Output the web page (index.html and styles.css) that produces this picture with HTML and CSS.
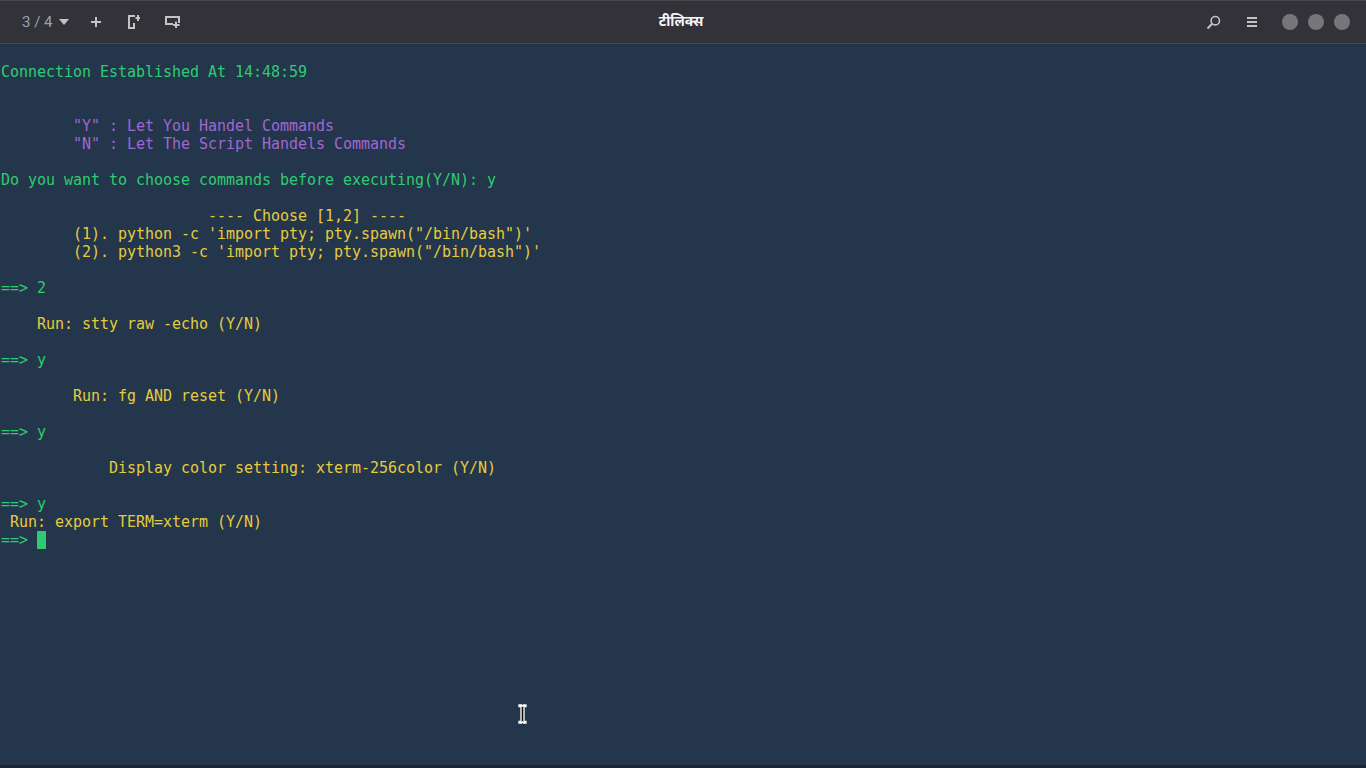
FILE: index.html
```html
<!DOCTYPE html>
<html lang="en">
<head>
    <meta charset="UTF-8">
    <title>टीलिक्स</title>
    <link rel="stylesheet" href="styles.css">
</head>
<body>
    <header class="toolbar">
        <div class="toolbar-left">
            <span class="tab-count">3 / 4</span>
            <svg class="icon caret" width="10" height="6" viewBox="0 0 10 6"><path d="M0 0h10L5 6z"/></svg>
            <svg class="icon add" width="12" height="12" viewBox="0 0 12 12"><path d="M5 1h2v4h4v2H7v4H5V7H1V5h4z"/></svg>
            <svg class="icon split-v" width="12" height="14" viewBox="0 0 12 14"><path d="M0 0h7v2H2v10h3V8h2v6H0z"/><path d="M9 0h2v2h1v2h-1v2H9V4H7.500V2H9z"/></svg>
            <svg class="icon split-h" width="15" height="12" viewBox="0 0 15 12"><path d="M0 0h15v7h-2V2H2v5h6v2H0z"/><path d="M10 5.500h2V8h2.500v2H12v2h-2v-2H8V8h2z"/></svg>
        </div>
        <div class="title">टीलिक्स</div>
        <div class="toolbar-right">
            <svg class="icon search" width="15" height="15" viewBox="0 0 15 15"><circle cx="9.300" cy="5.700" r="4.200" fill="none" stroke="#c4c4c6" stroke-width="1.600"/><path d="M6.200 8.800L1.500 13.500" fill="none" stroke="#c4c4c6" stroke-width="2"/></svg>
            <svg class="icon menu" width="10" height="10" viewBox="0 0 10 10"><path d="M0 0h10v2H0zM0 4h10v2H0zM0 8h10v2H0z"/></svg>
            <div class="window-buttons">
                <span class="window-button"></span>
                <span class="window-button"></span>
                <span class="window-button"></span>
            </div>
        </div>
    </header>

    <main class="terminal">
<pre class="output">

<span class="green">Connection Established At 14:48:59</span>


<span class="purple">        "Y" : Let You Handel Commands</span>
<span class="purple">        "N" : Let The Script Handels Commands</span>

<span class="green">Do you want to choose commands before executing(Y/N): y</span>

<span class="yellow">                       ---- Choose [1,2] ----</span>
<span class="yellow">        (1). python -c 'import pty; pty.spawn("/bin/bash")'</span>
<span class="yellow">        (2). python3 -c 'import pty; pty.spawn("/bin/bash")'</span>

<span class="green">==&gt; 2</span>

<span class="yellow">    Run: stty raw -echo (Y/N)</span>

<span class="green">==&gt; y</span>

<span class="yellow">        Run: fg AND reset (Y/N)</span>

<span class="green">==&gt; y</span>

<span class="yellow">            Display color setting: xterm-256color (Y/N)</span>

<span class="green">==&gt; y</span>
<span class="yellow"> Run: export TERM=xterm (Y/N)</span>
<span class="green">==&gt; </span><span class="cursor"> </span></pre>
        <svg class="mouse-cursor" width="9" height="20" viewBox="0 0 9 20"><path d="M1 1h2.500l1 1 1-1H8v1.500H6v15H8V19H5.500l-1-1-1 1H1v-1.500h2v-15H1z" fill="#111" stroke="#fff" stroke-width="1.300"/></svg>
    </main>

    <div class="bottom-strip"></div>
</body>
</html>
```

FILE: styles.css
```css
html, body {
    height: 100%;
}

body {
    margin: 0;
    display: flex;
    flex-direction: column;
    overflow: hidden;
    background-color: #24364b;
    font-family: "Noto Sans", "Open Sans", sans-serif;
}

.toolbar {
    flex: none;
    height: 42px;
    display: grid;
    grid-template-columns: 1fr auto 1fr;
    align-items: center;
    padding: 0 16px 0 22px;
    background-color: #323238;
    border-top: 1px solid #47474d;
    border-bottom: 1px solid #47484e;
}

.toolbar-left {
    display: flex;
    align-items: center;
}

.toolbar-right {
    display: flex;
    align-items: center;
    justify-content: flex-end;
}

.icon {
    display: block;
    fill: #c4c4c6;
}

.tab-count {
    width: 37px;
    color: #98a3b5;
    font-size: 15px;
    font-family: Roboto, sans-serif;
    white-space: nowrap;
}

.add {
    margin-left: 21px;
}

.split-v {
    margin-left: 26px;
}

.split-h {
    margin-left: 25px;
}

.title {
    margin: 0 10px 3px 0;
    color: #f4f4f6;
    font-size: 14px;
    font-weight: 700;
}

.menu {
    margin-left: 26px;
}

.window-buttons {
    display: flex;
    gap: 10px;
    margin-left: 25px;
}

.window-button {
    width: 16px;
    height: 16px;
    border-radius: 50%;
    background-color: #77767b;
}

.terminal {
    flex: 1;
    position: relative;
    min-height: 0;
}

.output {
    margin: 0;
    padding: 1px 0 0 1px;
    font-family: "DejaVu Sans Mono", monospace;
    font-size: 15px;
    line-height: 18px;
    letter-spacing: -0.03px;
}

.green {
    color: #2ecc71;
}

.purple {
    color: #a066d3;
}

.yellow {
    color: #e6cb3e;
}

.cursor {
    display: inline-block;
    width: 9px;
    height: 18px;
    vertical-align: top;
    background-color: #2ecc71;
}

.mouse-cursor {
    position: absolute;
    left: 518px;
    top: 660px;
}

.bottom-strip {
    flex: none;
    height: 3px;
    background-color: #1c2430;
}
```
